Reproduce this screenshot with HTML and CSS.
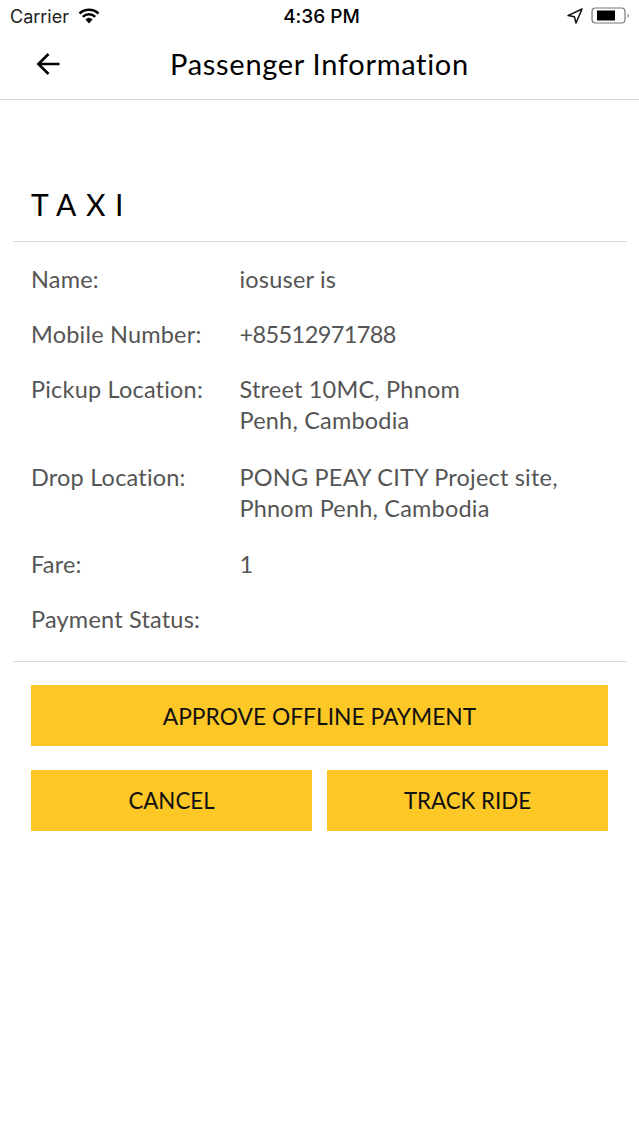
FILE: index.html
```html
<!DOCTYPE html>
<html lang="en">
<head>
<meta charset="utf-8">
<title>Passenger Information</title>
<link rel="stylesheet" href="styles.css">
</head>
<body>
<div class="status">
  <div class="status-left">
    <span>Carrier</span>
    <svg class="wifi" viewBox="0 0 22 16" width="22" height="16"><path d="M11 15.500 7.400 11.400a5.400 5.400 0 0 1 7.200 0Z" fill="#000"/><path d="M4.800 8.800a9 9 0 0 1 12.400 0" fill="none" stroke="#000" stroke-width="2.500"/><path d="M1.500 5.500a13.800 13.800 0 0 1 19 0" fill="none" stroke="#000" stroke-width="2.500"/></svg>
  </div>
  <div class="status-time">4:36 PM</div>
  <div class="status-right">
    <svg viewBox="0 0 16 16" width="16" height="16"><path d="M15 1 1 7.600l6.400 1.200L9 15Z" fill="none" stroke="#111" stroke-width="1.500" stroke-linejoin="round"/></svg>
    <svg viewBox="0 0 40 18" width="40" height="18"><rect x="1" y="1" width="33" height="15" rx="3.500" fill="#fff" stroke="#777" stroke-width="1.200"/><rect x="6" y="3.500" width="18" height="10" fill="#000"/><path d="M36.500 6.500a2.500 2.500 0 0 1 0 4.500Z" fill="#888"/></svg>
  </div>
</div>
<header class="nav">
  <svg class="back" viewBox="0 0 24 24" width="24" height="24"><path d="M23.500 12H2.500M12.500 2 2.400 12l10.100 10" fill="none" stroke="#000" stroke-width="2.600"/></svg>
  <h1>Passenger Information</h1>
</header>
<main>
  <h2>TAXI</h2>
  <section class="details">
    <div class="row"><div class="label">Name:</div><div class="value">iosuser is</div></div>
    <div class="row"><div class="label">Mobile Number:</div><div class="value digits">+85512971788</div></div>
    <div class="row multi"><div class="label">Pickup Location:</div><div class="value narrow">Street 10MC, Phnom Penh, Cambodia</div></div>
    <div class="row multi"><div class="label">Drop Location:</div><div class="value">PONG PEAY CITY Project site, Phnom Penh, Cambodia</div></div>
    <div class="row"><div class="label">Fare:</div><div class="value">1</div></div>
    <div class="row"><div class="label">Payment Status:</div><div class="value"></div></div>
  </section>
  <div class="actions">
    <button class="btn">APPROVE OFFLINE PAYMENT</button>
    <div class="pair">
      <button class="btn">CANCEL</button>
      <button class="btn">TRACK RIDE</button>
    </div>
  </div>
</main>
</body>
</html>
```
FILE: styles.css
```css
* { box-sizing: border-box; }
html, body { margin: 0; padding: 0; }
body { width: 639px; height: 1136px; background: #fff; color: #000; font-family: "Lato", "Noto Sans", sans-serif; font-variant-ligatures: none; overflow: hidden; }
.status { height: 32px; display: grid; grid-template-columns: 1fr auto 1fr; align-items: center; padding: 0 8px 0 10px; font-family: "Inter", "Liberation Sans", sans-serif; }
.status-left { display: flex; align-items: center; gap: 9px; color: #222; }
.status-left span { font-size: 18px; }
.status-time { font-weight: 500; font-size: 19px; position: relative; left: 1px; }
.status-right { display: flex; justify-content: flex-end; align-items: center; gap: 8px; }
.nav { height: 68px; border-bottom: 1px solid #d9d9d9; display: flex; align-items: center; justify-content: center; position: relative; }
.back { position: absolute; left: 36px; top: 20px; }
h1 { margin: 0; font-size: 29px; font-weight: 400; letter-spacing: 0.7px; position: relative; top: -2px; }
main { padding: 0 12px 0 13px; }
h2 { margin: 0; height: 142px; padding: 83px 0 0 18px; font-size: 30px; line-height: 42px; font-weight: 400; letter-spacing: 9.500px; border-bottom: 1px solid #d9d9d9; }
.details { padding: 22px 0 26px 18px; border-bottom: 1px solid #d9d9d9; display: flex; flex-direction: column; gap: 24px; color: #555; font-size: 23.500px; line-height: 31px; }
.row { display: flex; min-height: 31px; }
.multi { margin-bottom: 1.500px; }
.label { width: 208.500px; flex: none; letter-spacing: 0.2px; }
.value { width: 340px; letter-spacing: 0.2px; }
.value.digits { letter-spacing: -0.6px; }
.value.narrow { width: 250px; }
.actions { padding: 23px 19px 0 18px; display: flex; flex-direction: column; gap: 24px; }
.pair { display: flex; gap: 15px; }
.pair .btn { flex: 1; font-size: 22.300px; padding-bottom: 1px; }
.btn { height: 61px; border: 0; padding: 0; background: #fdc826; color: #111; font-family: inherit; font-size: 22.800px; }
```
